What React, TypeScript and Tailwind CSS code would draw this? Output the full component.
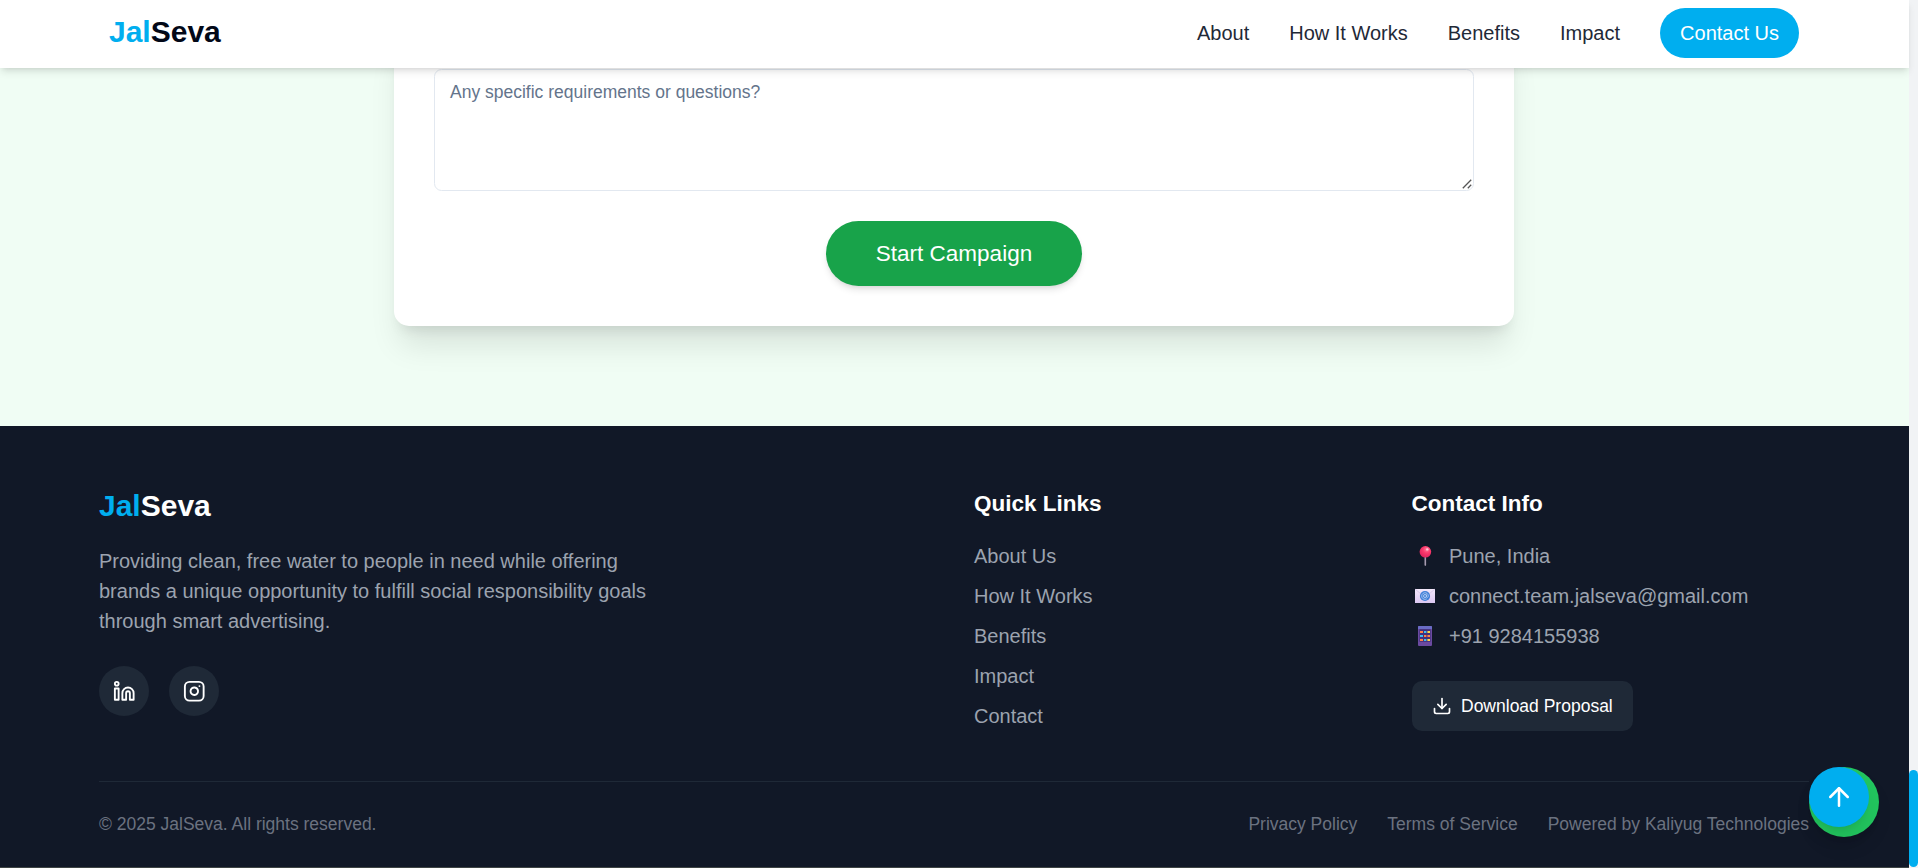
import { ArrowUp, Download, Instagram, Linkedin } from "lucide-react";

const navLinks = ["About", "How It Works", "Benefits", "Impact"];
const quickLinks = ["About Us", "How It Works", "Benefits", "Impact", "Contact"];
const legalLinks = ["Privacy Policy", "Terms of Service", "Powered by Kaliyug Technologies"];

function PinIcon() {
  return (
    <svg width="20" height="20" viewBox="0 0 20 20">
      <defs>
        <radialGradient id="pin" cx="0.62" cy="0.3" r="0.7">
          <stop offset="0" stopColor="#ff7a9c" />
          <stop offset="0.45" stopColor="#fb3a6c" />
          <stop offset="1" stopColor="#e0245e" />
        </radialGradient>
      </defs>
      <path d="M9.5 11h1.6v8.2l-.8.8-.8-.8z" fill="#a79bb0" />
      <circle cx="10.4" cy="5.8" r="5.8" fill="url(#pin)" />
      <circle cx="12.3" cy="3.4" r="1.2" fill="#ffc4d3" />
    </svg>
  );
}

function MailIcon() {
  return (
    <svg width="20" height="20" viewBox="0 0 20 20">
      <defs>
        <linearGradient id="mail" x1="0" y1="0" x2="0" y2="1">
          <stop offset="0" stopColor="#f3e8fa" />
          <stop offset="1" stopColor="#dcc8f2" />
        </linearGradient>
      </defs>
      <rect y="3" width="20" height="14" fill="url(#mail)" />
      <path d="M0 3l6 5M20 3l-6 5" stroke="#d3c3e4" strokeWidth="0.8" />
      <circle cx="10" cy="10" r="5.1" fill="#3f7fd8" />
      <circle cx="10" cy="10" r="1.5" fill="none" stroke="#b9cff3" strokeWidth="0.9" />
      <path d="M11.5 8.5v2c0 1.5 1.8 1.2 1.8-.5a3.3 3.3 0 1 0-1.5 2.8" fill="none" stroke="#b9cff3" strokeWidth="0.8" />
    </svg>
  );
}

function PhoneIcon() {
  return (
    <svg width="20" height="20" viewBox="0 0 20 20">
      <rect x="3" width="14" height="20" rx="1" fill="#6b4aa0" />
      <path d="M4 0h12a1 1 0 0 1 1 1v2H3V1a1 1 0 0 1 1-1z" fill="#6a6cc4" />
      <rect x="4.4" y="3.2" width="11.2" height="12.6" fill="#43307a" />
      <path d="M5 5h3v2H5zM9 9h2.4v2H9zM12.4 9H15v2h-2.6zM5 13h3v2H5z" fill="#ff8248" />
      <path d="M9 5h2.4v2H9zM5 9h3v2H5zM9 13h2.4v2H9z" fill="#3dbdf5" />
      <path d="M12.4 5H15v2h-2.6zM12.4 13H15v2h-2.6z" fill="#ffd84a" />
    </svg>
  );
}

const contacts = [
  { icon: <PinIcon />, text: "Pune, India" },
  { icon: <MailIcon />, text: "connect.team.jalseva@gmail.com" },
  { icon: <PhoneIcon />, text: "+91 9284155938" },
];

function Header() {
  return (
    <header className="relative z-10 flex h-[68px] items-center justify-between bg-white pr-[110px] pb-0.5 pl-[109px] shadow-[0_5px_7.5px_-1px_rgba(0,0,0,0.1),0_2.5px_5px_-2.5px_rgba(0,0,0,0.1)]">
      <div className="pb-0.5 text-[30px] leading-10 font-bold text-[#020817]">
        <span className="text-[#00aeef]">Jal</span>Seva
      </div>
      <nav className="flex items-center gap-10 text-xl leading-[30px] text-[#1f2937]">
        {navLinks.map((l) => (
          <a key={l}>{l}</a>
        ))}
        <a className="rounded-full bg-[#00aeef] px-5 py-2.5 text-white">Contact Us</a>
      </nav>
    </header>
  );
}

function CampaignForm() {
  return (
    <section className="flex h-[358px] items-start justify-center bg-[#f0fdf4] pr-px">
      <form className="-mt-10 flex w-[1120px] flex-col items-center rounded-[15px] bg-white px-10 pt-[41px] pb-10 shadow-[0_25px_31px_-6px_rgba(0,0,0,0.1),0_10px_12.5px_-7.5px_rgba(0,0,0,0.1)]">
        <div className="relative w-full">
          <textarea
            className="block h-[122px] w-full resize-none rounded-[7.5px] border border-[#e2e8f0] bg-white px-[15px] py-2.5 text-[17.5px] leading-[25px] placeholder:text-[#64748b]"
            placeholder="Any specific requirements or questions?"
          />
          <svg className="absolute right-[2px] bottom-[2px]" width="10" height="10" viewBox="0 0 10 10">
            <path d="M.8 9.2L9.2.8M5.8 9.2L9.2 5.8" stroke="#555" strokeWidth="1.3" fill="none" />
          </svg>
        </div>
        <button
          type="button"
          className="mt-[30px] h-[65px] w-64 rounded-full bg-[#18a34a] text-[22.5px] leading-[35px] text-white shadow-[0_5px_7.5px_-1px_rgba(0,0,0,0.1),0_2.5px_5px_-2.5px_rgba(0,0,0,0.1)]"
        >
          Start Campaign
        </button>
      </form>
    </section>
  );
}

function Footer() {
  return (
    <footer className="h-[442px] border-b border-[#3f4545] bg-[#111827] pr-[100px] pl-[99px] pt-[60px] text-xl leading-[30px] text-[#9ca3af]">
      <div className="grid grid-cols-4 gap-10">
        <div className="col-span-2">
          <div className="text-[30px] leading-10 font-bold text-white">
            <span className="text-[#00aeef]">Jal</span>Seva
          </div>
          <p className="mt-5 w-[560px]">
            Providing clean, free water to people in need while offering brands a unique opportunity to fulfill social
            responsibility goals through smart advertising.
          </p>
          <div className="mt-[30px] flex gap-5 text-white">
            <a className="flex size-[50px] items-center justify-center rounded-full bg-[#1f2937]">
              <Linkedin size={22.5} />
            </a>
            <a className="flex size-[50px] items-center justify-center rounded-full bg-[#1f2937]">
              <Instagram size={22.5} />
            </a>
          </div>
        </div>
        <div>
          <h3 className="text-[22.5px] leading-[35px] font-bold text-white">Quick Links</h3>
          <ul className="mt-5 flex flex-col gap-2.5">
            {quickLinks.map((l) => (
              <li key={l}>{l}</li>
            ))}
          </ul>
        </div>
        <div>
          <h3 className="text-[22.5px] leading-[35px] font-bold text-white">Contact Info</h3>
          <ul className="mt-5 flex flex-col gap-2.5">
            {contacts.map((c) => (
              <li key={c.text} className="flex items-center">
                <span className="mr-3.5 ml-[3.5px]">{c.icon}</span>
                {c.text}
              </li>
            ))}
          </ul>
          <button
            type="button"
            className="mt-[30px] flex h-[50px] w-[221px] items-center gap-[9.5px] rounded-[10px] bg-[#1f2937] pl-5 text-[17.5px] leading-[25px] whitespace-nowrap text-white"
          >
            <Download size={20} />
            Download Proposal
          </button>
        </div>
      </div>
      <div className="mt-[50px] flex justify-between border-t border-[#1f2937] pt-[30px] text-[17.5px] leading-[25px] text-[#6b7280]">
        <p>© 2025 JalSeva. All rights reserved.</p>
        <div className="flex gap-[30px]">
          {legalLinks.map((l) => (
            <a key={l}>{l}</a>
          ))}
        </div>
      </div>
    </footer>
  );
}

export default function App() {
  return (
    <div className="relative flex h-[868px] overflow-hidden font-['Liberation_Sans',Arial,sans-serif]">
      <div className="w-[1909px] shrink-0">
        <Header />
        <CampaignForm />
        <Footer />
      </div>
      <div className="flex flex-1 flex-col bg-[#f1f3f5] pt-[770px]">
        <div className="h-[97px] rounded-[5px] bg-[#00aeef]" />
      </div>
      <div className="absolute right-[39px] bottom-[31px] z-20 size-[70px] rounded-full bg-[#22c55e] shadow-[0_12px_19px_-4px_rgba(0,0,0,0.1),0_5px_7.5px_-5px_rgba(0,0,0,0.1)]">
        <button
          type="button"
          className="flex size-[60px] items-center justify-center rounded-full bg-[#00aeef] text-white shadow-[0_12px_19px_-4px_rgba(0,0,0,0.1),0_5px_7.5px_-5px_rgba(0,0,0,0.1)]"
        >
          <ArrowUp size={30} />
        </button>
      </div>
    </div>
  );
}
